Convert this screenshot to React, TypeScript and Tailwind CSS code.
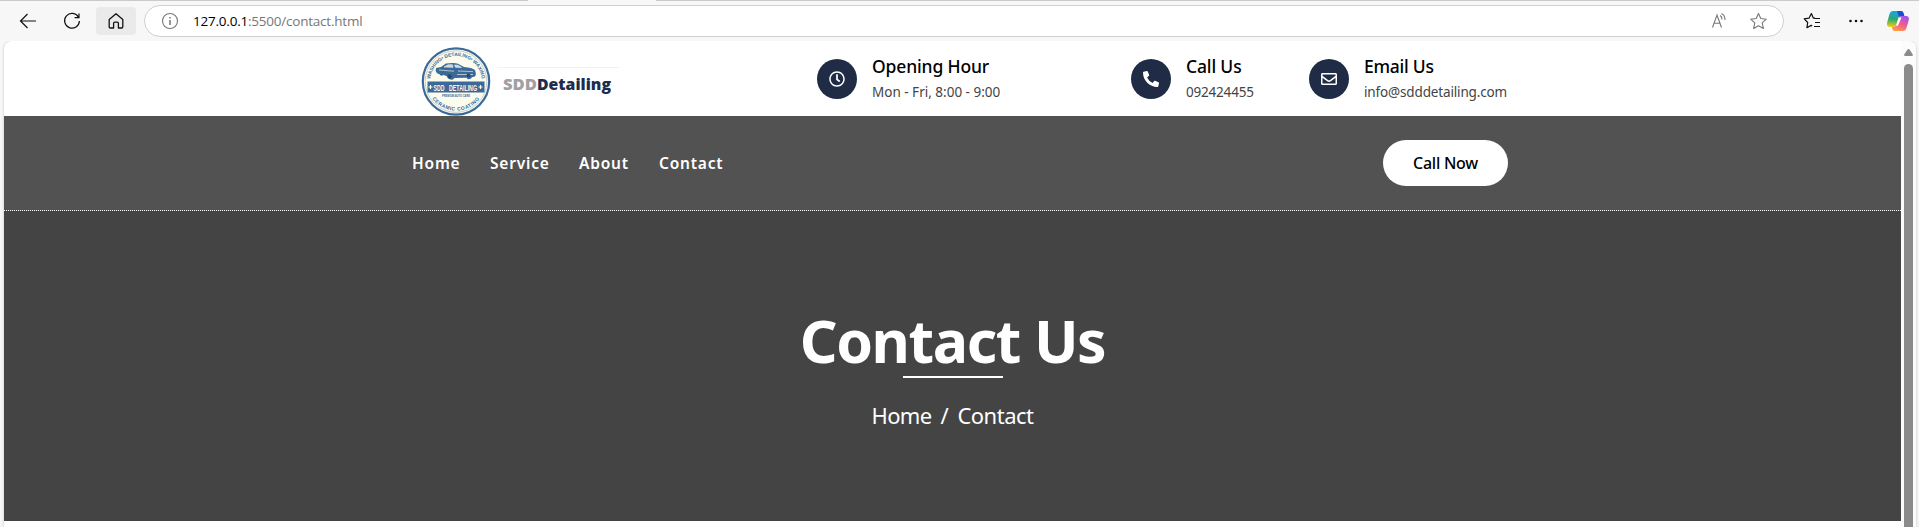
import React from "react";
import { FaPhoneAlt, FaRegClock, FaRegEnvelope } from "react-icons/fa";

function Toolbar() {
  return (
    <div className="flex h-[41px] items-start bg-[#f7f7f7]">
      <div className="flex h-[41px] w-[144px] items-center pl-[14px]">
        <svg width="28" height="28" viewBox="0 0 28 28" fill="none" stroke="#111" strokeWidth="1.2">
          <path d="M22 14H6.5M13.5 7L6.5 14l7 7" />
        </svg>
        <svg className="ml-[16px]" width="28" height="28" viewBox="0 0 28 28" fill="none" stroke="#111" strokeWidth="1.2">
          <path d="M20.5 10.2A7.4 7.4 0 1 0 21.4 14M21 6.5v4.2h-4.4" />
        </svg>
        <div className="ml-[10px] flex h-7 w-10 items-center justify-center rounded bg-[#eaeaea]">
          <svg width="16" height="18" viewBox="0 0 16 18" fill="none" stroke="#111" strokeWidth="1.3" strokeLinejoin="round">
            <path d="M1.2 7.6L8 1.8l6.8 5.8v7.2q0 1.2-1.2 1.2h-3.2v-4.4q0-1.4-1.2-1.4H6.8q-1.2 0-1.2 1.4V16H2.4q-1.2 0-1.2-1.2z" />
          </svg>
        </div>
      </div>
      <div className="mt-[5px] flex h-8 w-[1640px] items-center rounded-full border border-[#cfcfcf] bg-white pl-[16px] pr-[15px]">
        <svg width="18" height="18" viewBox="0 0 18 18" fill="none" stroke="#767676" strokeWidth="1.1">
          <circle cx="9" cy="9" r="7.5" />
          <path d="M9 8v5M9 5v1.5" strokeWidth="1.5" />
        </svg>
        <span className="ml-[14px] whitespace-pre font-['Open_Sans','Noto_Sans',sans-serif] text-[13.5px] tracking-[-0.22px] text-[#777]">
          <span className="text-black">127.0.0.1</span>:5500/contact.html
        </span>
        <svg className="ml-auto" width="18" height="18" viewBox="0 0 18 18" fill="none" stroke="#777" strokeWidth="1.1">
          <path d="M3.5 15.5L8 3l4.500 12.500M5 11.200h6M11.200 3.500q1.800 1.200 1.800 4M12.500 1.500q3.600 1.800 3.500 6.500" />
        </svg>
        <svg className="ml-[21px]" width="20" height="20" viewBox="0 0 20 20" fill="none" stroke="#777" strokeWidth="1.1" strokeLinejoin="round">
          <path d="M10.500 2.500l2.300 5 5.500.7-4.100 3.700 1.200 5.600-4.900-2.700-4.900 2.700 1.200-5.600-4.100-3.700 5.500-.7z" />
        </svg>
      </div>
      <div className="flex h-[41px] items-center pl-[19px]">
        <svg width="18" height="18" viewBox="0 0 18 18" fill="none" stroke="#111" strokeWidth="1.200" strokeLinejoin="round">
          <path d="M12 6.200l-1.700-.3L8.400 1.500 6 6.200l-4.800.7 3.500 3.600-.8 5.200 4.300-2.300 1 .5M10.500 6.500H17M12 10.500h5M11 14.500h6" />
        </svg>
        <svg className="ml-[27px]" width="16" height="4" viewBox="0 0 16 4" fill="#111">
          <circle cx="2.500" cy="2" r="1.300" />
          <circle cx="8" cy="2" r="1.300" />
          <circle cx="13.500" cy="2" r="1.300" />
        </svg>
        <svg className="ml-[22px]" width="24" height="22" viewBox="0 0 24 22">
          <defs>
            <linearGradient id="cool" x1="0.300" y1="0" x2="0.200" y2="1">
              <stop offset="0" stopColor="#1aa4ee" />
              <stop offset="0.500" stopColor="#2ca96e" />
              <stop offset="1" stopColor="#f3d012" />
            </linearGradient>
            <linearGradient id="warm" x1="0.700" y1="0" x2="0.300" y2="1">
              <stop offset="0" stopColor="#a052ee" />
              <stop offset="0.500" stopColor="#ef5a93" />
              <stop offset="1" stopColor="#ff9b45" />
            </linearGradient>
          </defs>
          <path d="M7 1h8q2 0 2.500 2l.8 3h-3q-2 0-2.700 2l-2 6q-.8 3-3 3H4q-3.500 0-3-4L3.500 4Q4.500 1 7 1z" fill="url(#cool)" />
          <path d="M17 21H9q-2 0-2.500-1.500L6 17h2q2 0 2.700-3l2-6q.6-2 2.700-2H20q3.500 0 2.800 4l-2.300 8q-1 3-3.500 3z" fill="url(#warm)" />
          <path d="M11 1h4q2 0 2.500 2l.8 3h-3q-1.500 0-2.300 1z" fill="#1b4fcb" />
          <path d="M12.500 7.500h3l-3 7q-.5 1.500-2.500 1.500z" fill="#fff" />
        </svg>
      </div>
    </div>
  );
}

function Logo() {
  return (
    <svg className="ml-[-1px] mt-[5px]" width="200" height="70" viewBox="420 46 200 70">
      <defs>
        <path id="topArc" d="M430.500 87A26 26 0 1 1 481.500 87" />
        <path id="bottomArc" d="M427.300 88A29.500 29.500 0 0 0 484.700 88" />
      </defs>
      <circle cx="456" cy="81.500" r="33.200" fill="#fbfbee" stroke="#3c6a98" strokeWidth="2.200" />
      <circle cx="456" cy="81.500" r="30.800" fill="none" stroke="#9db4c6" strokeWidth="0.600" />
      <g fill="#3c6a98" fontFamily="Liberation Sans, sans-serif" fontWeight="700" textAnchor="middle">
        <text fontSize="4.900"><textPath href="#topArc" startOffset="50%">WASHING• DETAILING• WAXING</textPath></text>
        <text fontSize="5" letterSpacing="0.500"><textPath href="#bottomArc" startOffset="50%">CERAMIC COATING</textPath></text>
      </g>
      <path d="M436 68l5-1 5-3.500q8-1 12 .2l6 3.300q8 .5 11 3l1 4-1 2.500-3 .7q-1 2.500-4 2l-1.500-1.500-12 .3q-1 2.200-4 1.600-2-.2-2.500-3l-4.500-1.500q-3 1.500-4-.8l-2.500-1q-2-2.500-1-5.300z" fill="#3c6a98" />
      <path d="M444 67l4-2.200h4.500l.5 2.500zM454.500 65l3.500.2 3.500 2.300-6-.2zM439 70l15 1.200M458 71l15 .6M457 74.500h16" fill="#c9d7dd" stroke="#dfe6e2" strokeWidth="0.700" />
      <circle cx="449.500" cy="76.500" r="2.300" fill="#25496f" />
      <circle cx="468.500" cy="75.500" r="2" fill="#25496f" />
      <rect x="427.500" y="81.500" width="57" height="11" fill="#3c6a98" />
      <g fill="#fbfbee" fontWeight="700" fontSize="9.500" fontFamily="Liberation Sans Narrow, Liberation Sans, sans-serif">
        <text x="433.500" y="90.500" textLength="11" lengthAdjust="spacingAndGlyphs">SDD</text>
        <text x="449" y="90.500" textLength="28" lengthAdjust="spacingAndGlyphs">DETAILING</text>
        <path d="M428.500 87h4M430.500 85v4M478.500 87h4M480.500 85v4" stroke="#fbfbee" strokeWidth="1.200" />
      </g>
      <text x="442" y="96.800" fontSize="3" fontWeight="700" fill="#3c6a98" fontFamily="Liberation Sans, sans-serif" textLength="28" lengthAdjust="spacingAndGlyphs">PREMIUM AUTO CARE</text>
      <path d="M497 67.500h122" stroke="#f2f2f2" />
      <g fontFamily="Open Sans, Noto Sans, sans-serif" fontSize="16.500" fontWeight="800">
        <text x="503" y="89.500" fill="#a1a1a3" textLength="34" lengthAdjust="spacingAndGlyphs">SDD</text>
        <text x="537" y="89.500" fill="#202c4b" textLength="74" lengthAdjust="spacingAndGlyphs">Detailing</text>
      </g>
    </svg>
  );
}

type InfoProps = { icon: React.ReactNode; title: string; text: string; className: string; titleClass: string; textClass: string };

function Info({ icon, title, text, className, titleClass, textClass }: InfoProps) {
  return (
    <div className={`flex shrink-0 whitespace-nowrap pt-[13px] ${className}`}>
      <div className="mt-[5px] flex size-10 shrink-0 items-center justify-center rounded-full bg-[#202c45] text-white">{icon}</div>
      <div className="ml-[15px]">
        <div className={`h-6 text-[17.500px] font-medium leading-6 text-black ${titleClass}`}>{title}</div>
        <div className={`mt-[4px] text-[13.500px] leading-[21px] text-[#444] ${textClass}`}>{text}</div>
      </div>
    </div>
  );
}

export default function App() {
  return (
    <div className="h-[527px] w-[1919px] overflow-hidden bg-[#f7f7f7] font-['Noto_Sans','Open_Sans',sans-serif]">
      <div className="relative">
        <Toolbar />
        <div className="absolute inset-x-0 top-0 flex h-px justify-between">
          <span className="w-[528px] bg-[#cbcbcb]" />
          <span className="w-[1263px] bg-[#cbcbcb]" />
        </div>
      </div>
      <div className="ml-[4px] flex h-[486px] w-[1912px] overflow-hidden rounded-t-lg bg-white shadow-[0_0_2px_1px_#dedede]">
        <div className="w-[1897px]">
          <header className="flex h-[75px] overflow-hidden">
            <div className="w-[813px] shrink-0 pl-[417px]"><Logo /></div>
            <Info className="w-[314px]" icon={<FaRegClock size={16} />} title="Opening Hour" text="Mon - Fri, 8:00 - 9:00" titleClass="tracking-[-0.150px]" textClass="" />
            <Info className="w-[178px]" icon={<FaPhoneAlt size={16} />} title="Call Us" text="092424455" titleClass="tracking-[-0.150px]" textClass="tracking-[-0.200px]" />
            <Info className="" icon={<FaRegEnvelope size={16} />} title="Email Us" text="info@sdddetailing.com" titleClass="tracking-[-0.250px]" textClass="tracking-[-0.150px]" />
          </header>
          <nav className="flex h-[95px] items-start border-b border-dotted border-white bg-[#525252] pl-[408px] pt-[24px] text-[15.500px] font-semibold text-white">
            <div className="flex h-[48px] flex-1 items-center tracking-[0.800px]">
              <a className="w-[78px]">Home</a>
              <a className="w-[89px]">Service</a>
              <a className="w-[80px]">About</a>
              <a>Contact</a>
            </div>
            <a className="mr-[393px] flex h-[46px] w-[125px] items-center justify-center rounded-full bg-white text-[16px] font-medium tracking-[-0.250px] text-black">Call Now</a>
          </nav>
          <main className="flex h-[310px] flex-col items-center bg-[#444] pt-[90px] text-white">
            <h1 className="h-[75px] text-[59px] font-bold leading-[78px] tracking-[-1.400px]">Contact Us</h1>
            <div className="h-[2px] w-[100px] bg-white" />
            <div className="mt-[21px] flex w-[162px] text-[22px] leading-8 tracking-[-0.650px]">
              <span className="w-[70px]">Home</span>
              <span className="w-[17px]">/</span>
              <span className="tracking-[-0.500px]">Contact</span>
            </div>
          </main>
        </div>
        <div className="flex w-[15px] flex-col items-center bg-[#fcfcfc]">
          <svg className="mt-[8px]" width="9" height="7" viewBox="0 0 9 7" fill="#8b8b8b">
            <path d="M4.500 0q.7 0 1.200.7L8.800 5.500Q9 7 8 7H1Q0 7 .2 5.500L3.300.7Q3.800 0 4.500 0z" />
          </svg>
          <div className="mt-[8px] w-[9px] flex-1 rounded-t-full bg-[#8b8b8b]" />
        </div>
      </div>
    </div>
  );
}
